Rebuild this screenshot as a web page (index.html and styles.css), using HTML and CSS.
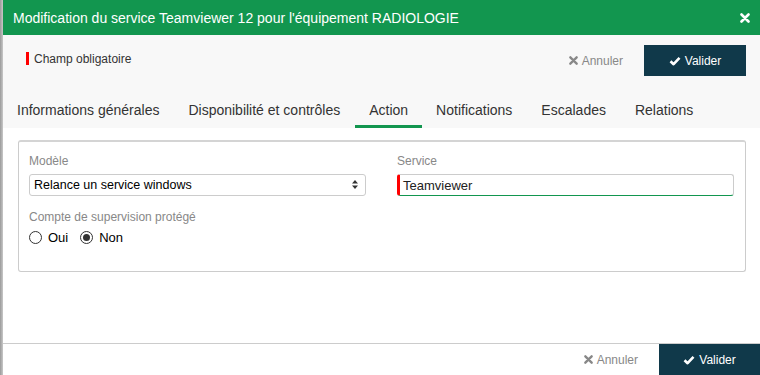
FILE: index.html
```html
<!DOCTYPE html>
<html lang="fr">
<head>
    <meta charset="UTF-8">
    <meta name="viewport" content="width=device-width, initial-scale=1.0">
    <title>Modification du service</title>
    <link rel="stylesheet" href="styles.css">
</head>
<body>
    <div class="modal">
        <div class="modal-header">
            <span class="modal-title">Modification du service Teamviewer 12 pour l'équipement RADIOLOGIE</span>
            <span class="close-button">
                <svg width="10" height="10" viewBox="0 0 10 10"><path d="M1.5 1.5 L8.5 8.5 M8.5 1.5 L1.5 8.5" stroke="#fff" stroke-width="2.6" stroke-linecap="round"/></svg>
            </span>
        </div>

        <div class="modal-top">
            <div class="toolbar">
                <div class="legend"><span class="legend-mark"></span>Champ obligatoire</div>
                <div class="actions">
                    <span class="cancel-button">
                        <svg width="9" height="9" viewBox="0 0 10 10"><path d="M1.5 1.5 L8.5 8.5 M8.5 1.5 L1.5 8.5" stroke="#888" stroke-width="2.6" stroke-linecap="round"/></svg>
                        Annuler
                    </span>
                    <span class="valid-button">
                        <svg width="12" height="10" viewBox="0 0 12 10"><path d="M1.5 5.2 L4.6 8.2 L10.5 1.8" fill="none" stroke="#fff" stroke-width="2.6" stroke-linejoin="round"/></svg>
                        Valider
                    </span>
                </div>
            </div>
            <ul class="tabs">
                <li>Informations générales</li>
                <li>Disponibilité et contrôles</li>
                <li class="active">Action</li>
                <li>Notifications</li>
                <li>Escalades</li>
                <li>Relations</li>
            </ul>
        </div>

        <div class="modal-body">
            <div class="panel">
                <div class="field">
                    <label>Modèle</label>
                    <div class="select">
                        Relance un service windows
                        <svg width="6" height="9" viewBox="0 0 6 9"><path d="M0 3.5 L3 0 L6 3.5 Z M0 5.5 L3 9 L6 5.5 Z" fill="#333"/></svg>
                    </div>
                </div>
                <div class="field">
                    <label>Service</label>
                    <div class="input required">Teamviewer</div>
                </div>
                <div class="field">
                    <label>Compte de supervision protégé</label>
                    <div class="radios">
                        <span class="radio"><span class="radio-dot"></span>Oui</span>
                        <span class="radio checked"><span class="radio-dot"></span>Non</span>
                    </div>
                </div>
            </div>
        </div>

        <div class="modal-footer">
            <span class="cancel-button">
                <svg width="9" height="9" viewBox="0 0 10 10"><path d="M1.5 1.5 L8.5 8.5 M8.5 1.5 L1.5 8.5" stroke="#888" stroke-width="2.6" stroke-linecap="round"/></svg>
                Annuler
            </span>
            <span class="valid-button footer-valid">
                <svg width="12" height="10" viewBox="0 0 12 10"><path d="M1.5 5.2 L4.6 8.2 L10.5 1.8" fill="none" stroke="#fff" stroke-width="2.6" stroke-linejoin="round"/></svg>
                Valider
            </span>
        </div>
    </div>
</body>
</html>
```

FILE: styles.css
```css
body {
    margin: 0;
    font-family: Arial, "Liberation Sans", sans-serif;
    background: linear-gradient(to right, #9a9a9a, #c8c8c8 3px);
    color: #333;
}
.modal {
    margin-left: 3px;
    height: 375px;
    background: #fff;
    display: flex;
    flex-direction: column;
}
.modal-header {
    height: 35px;
    background-color: #12964f;
    color: #fff;
    display: flex;
    align-items: center;
    justify-content: space-between;
    padding: 0 10px 0 10px;
}
.modal-title {
    font-size: 14px;
}
.close-button {
    display: flex;
    margin-top: 1px;
}
.modal-top {
    background-color: #f8f8f8;
}
.toolbar {
    display: flex;
    justify-content: space-between;
    align-items: center;
    padding: 10px 14px 0 23px;
}
.legend {
    font-size: 12px;
    display: flex;
    align-items: center;
    margin-top: -4px;
}
.legend-mark {
    width: 3px;
    height: 13px;
    background: #f00;
    margin-right: 5px;
}
.actions {
    display: flex;
    align-items: center;
}
.cancel-button {
    color: #888;
    font-size: 12px;
    display: flex;
    align-items: center;
    gap: 4px;
    margin-right: 21px;
}
.valid-button {
    background-color: #10394a;
    color: #fff;
    font-size: 12px;
    width: 102px;
    height: 31px;
    display: flex;
    align-items: center;
    justify-content: center;
    gap: 4px;
}
.tabs {
    list-style: none;
    margin: 19px 0 0 0;
    padding: 0;
    display: flex;
}
.tabs li {
    font-size: 14px;
    padding: 0 15px 0 14px;
    height: 30px;
    line-height: 30px;
    border-bottom: 3px solid transparent;
}
.tabs li.active {
    border-bottom-color: #12964f;
    padding: 0 14px 0 14px;
}
.modal-body {
    flex: 1;
    padding: 12px 14px 0 15px;
}
.panel {
    border: 1px solid #ccc;
    border-top: 2px solid #d4d4d4;
    border-radius: 3px;
    display: grid;
    grid-template-columns: 1fr 1fr;
    column-gap: 31px;
    row-gap: 14px;
    padding: 12px 11px 26px 10px;
}
.field label {
    display: block;
    font-size: 12px;
    color: #888;
    margin-bottom: 6px;
}
.select, .input {
    height: 20px;
    border: 1px solid #ccc;
    border-radius: 3px;
    font-size: 13px;
    color: #000;
    display: flex;
    align-items: center;
    padding: 0 7px 0 4px;
}
.select {
    justify-content: space-between;
    font-size: 12.5px;
    padding-bottom: 1px;
    height: 19px;
}
.input.required {
    border-left: 3px solid #f00;
    border-bottom: 1px solid #12964f;
    padding-left: 3px;
    color: #222;
}
.radios {
    display: flex;
    gap: 12px;
    font-size: 13px;
    color: #000;
}
.radio {
    display: flex;
    align-items: center;
    gap: 6px;
}
.radio-dot {
    width: 11px;
    height: 11px;
    border: 1px solid #333;
    border-radius: 50%;
    display: flex;
    align-items: center;
    justify-content: center;
}
.radio.checked .radio-dot::after {
    content: "";
    width: 7px;
    height: 7px;
    border-radius: 50%;
    background: #333;
}
.modal-footer {
    border-top: 1px solid #ccc;
    height: 31px;
    display: flex;
    justify-content: flex-end;
    align-items: center;
}
.footer-valid {
    width: 101px;
}
```
